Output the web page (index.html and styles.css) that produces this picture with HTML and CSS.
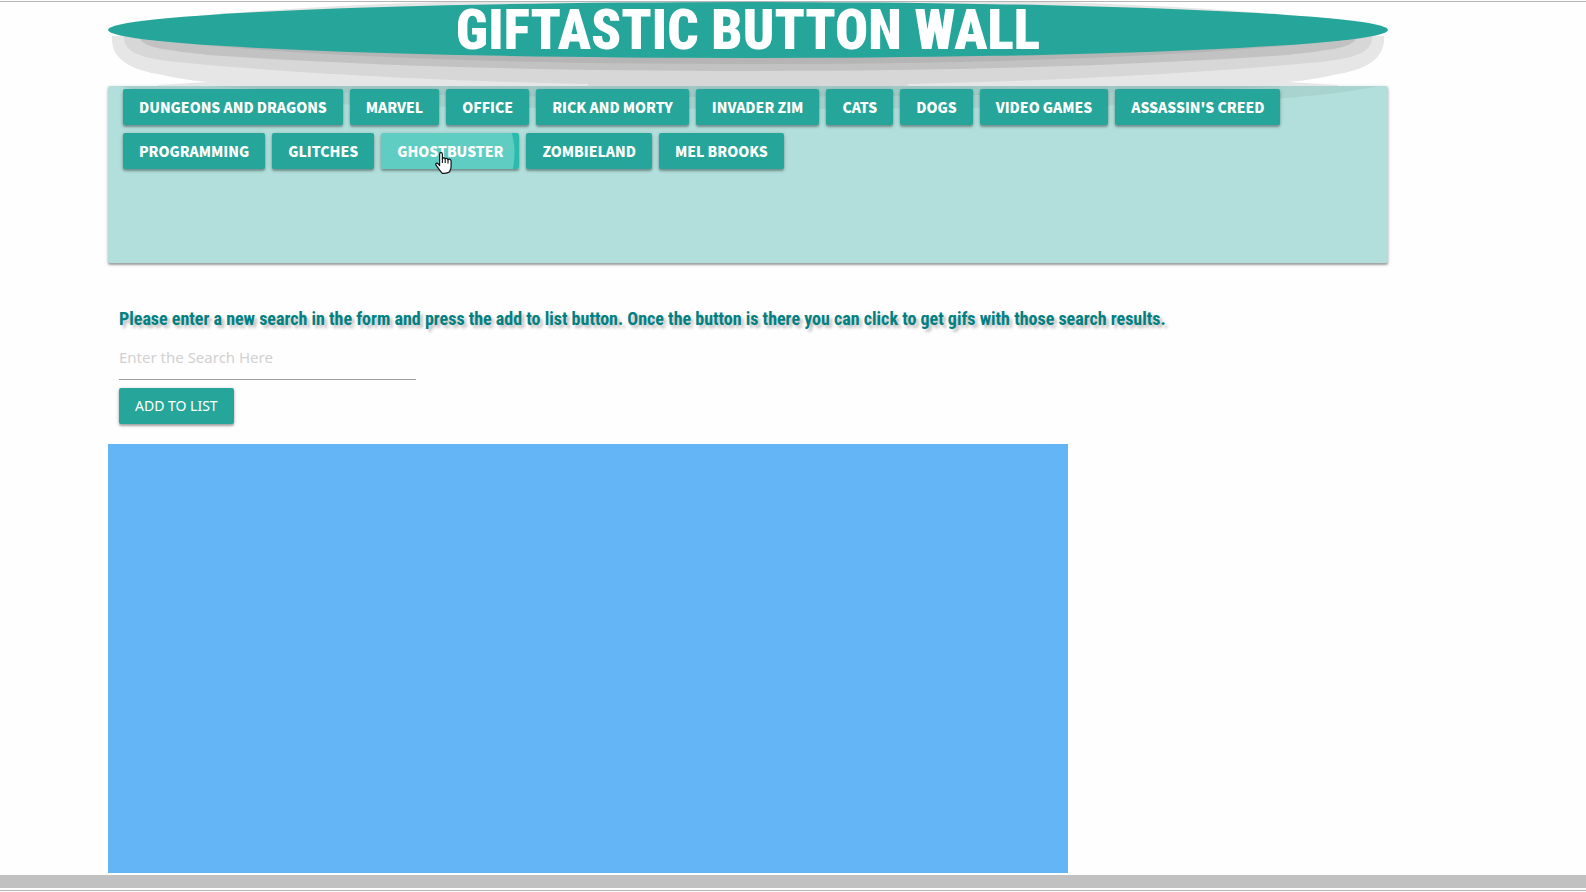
FILE: index.html
```html
<!DOCTYPE html>
<html lang="en">
<head>
<meta charset="utf-8">
<title>Giftastic Button Wall</title>
<link rel="stylesheet" href="styles.css">
</head>
<body>
<main class="container">
  <header class="banner">
    <svg class="banner-shadow" viewBox="0 0 1280 118" preserveAspectRatio="none" aria-hidden="true">
      <path fill="#e6e6e6" d="M42 18 L110 12 Q210 4 330 0 H950 Q1070 4 1170 12 L1238 18 Z"/>
      <path fill="#e6e6e6" d="M4 34 C3 52 14 66 50 72 Q75 78 100 80 L50 83 V84 H1230 V83 L1180 80 Q1205 78 1230 72 C1266 66 1277 52 1276 34 Z"/>
      <path fill="#d7d7d7" d="M16 34 C15 48 28 55 60 59 C150 69 330 79 480 82 V84 H800 V82 C950 79 1130 69 1220 59 C1252 55 1265 48 1264 34 Z"/>
      <path fill="#c2c2c2" d="M32 36 C34 46 60 48 100 53 C260 64 440 69 640 69 S1020 64 1180 53 C1220 48 1246 46 1248 36 Z"/>
      <path fill="#b5b5b5" d="M48 38 C150 50 330 62 640 62 S1130 50 1232 38 Z"/>
      <path fill="#000" fill-opacity=".05" d="M0 84 H1270 Q1230 93 1150 98 C950 110 330 110 130 98 Q50 93 10 84 Z"/>
      <path fill="#000" fill-opacity=".04" d="M100 84 H1180 Q1000 94 640 95 T100 84 Z"/>
    </svg>
    <h1 class="title">GIFTASTIC BUTTON WALL</h1>
  </header>

  <section class="wall">
    <button class="btn" type="button">DUNGEONS AND DRAGONS</button>
    <button class="btn" type="button">MARVEL</button>
    <button class="btn" type="button">OFFICE</button>
    <button class="btn" type="button">RICK AND MORTY</button>
    <button class="btn" type="button">INVADER ZIM</button>
    <button class="btn" type="button">CATS</button>
    <button class="btn" type="button">DOGS</button>
    <button class="btn" type="button">VIDEO GAMES</button>
    <button class="btn" type="button">ASSASSIN'S CREED</button>
    <button class="btn" type="button">PROGRAMMING</button>
    <button class="btn" type="button">GLITCHES</button>
    <button class="btn btn-ripple" type="button">GHOSTBUSTER
      <svg class="pointer" viewBox="0 0 17 22" aria-hidden="true">
        <path fill="#fff" stroke="#10131c" stroke-width="1.2" stroke-linejoin="round" d="M4.6 13.5 V2.2 Q4.6 .7 6 .7 T7.4 2.2 V7 Q7.6 5.8 8.8 5.9 T10.2 7.2 Q10.5 6.2 11.6 6.3 T13 7.8 Q13.4 7 14.4 7.1 T16.1 8.8 V14.5 Q16.1 17 14.8 18.6 V19.8 Q12.5 21.3 9.5 21.3 H7.3 Q5.8 19.5 4.5 17.8 L1 13.2 Q.3 12 1.2 11.3 T3.2 11.8 Z"/>
        <path fill="none" stroke="#10131c" stroke-width="1.1" d="M7.4 6.8 V11 M10.2 7.2 V11 M13 7.8 V11.4"/>
      </svg>
    </button>
    <button class="btn" type="button">ZOMBIELAND</button>
    <button class="btn" type="button">MEL BROOKS</button>
  </section>

  <form class="search">
    <label class="prompt" for="term">Please enter a new search in the form and press the add to list button. Once the button is there you can click to get gifs with those search results.</label>
    <input class="field" id="term" type="text" placeholder="Enter the Search Here">
    <button class="btn btn-add" type="button">ADD TO LIST</button>
  </form>

  <section class="results"></section>
</main>
<footer class="bottom-bar"></footer>
</body>
</html>
```
FILE: styles.css
```css
* {
  box-sizing: border-box;
}

body {
  display: flex;
  flex-direction: column;
  min-height: 100vh;
  margin: 0;
  padding: 1px 0;
  background: #fefefe;
  font-family: "Noto Sans", sans-serif;
}

body::before,
body::after {
  content: "";
  height: 1px;
  background: #b5b5b5;
}

.container {
  display: flex;
  flex: 1;
  flex-direction: column;
  width: calc(100% - 198px);
  padding-left: 108px;
}

.banner {
  position: relative;
  margin-bottom: 28px;
}

.banner-shadow {
  position: absolute;
  top: 0;
  left: 0;
  width: 100%;
  height: 118px;
}

.title {
  position: relative;
  margin: 0;
  border-radius: 50%;
  background: #26a69a;
  color: #fff;
  font: 900 55px/56px "Roboto Condensed", Roboto, sans-serif;
  text-align: center;
}

.wall {
  display: flex;
  flex-wrap: wrap;
  align-content: flex-start;
  gap: 8px 7px;
  min-height: 177px;
  padding: 3px 15px;
  border-radius: 2px;
  background: #b2dfdb;
  box-shadow: 0 2px 2px rgba(0, 0, 0, .3), 0 1px 4px rgba(0, 0, 0, .15);
}

.btn {
  position: relative;
  height: 36px;
  padding: 0 16px;
  border: 0;
  border-radius: 2px;
  background: #26a69a;
  box-shadow: 0 2px 2px rgba(0, 0, 0, .25), 0 1px 4px rgba(0, 0, 0, .2);
  color: #fff;
  font: 900 14px/36px "Noto Sans CJK JP", sans-serif;
  white-space: nowrap;
  cursor: pointer;
}

.btn-ripple {
  background: radial-gradient(circle 73px at 61px 20px, #5fcdc2 72px, #2bbbad 73px);
}

.pointer {
  position: absolute;
  top: 19px;
  left: 54px;
  width: 17px;
  height: 22px;
}

.search {
  display: flex;
  flex-direction: column;
  align-items: flex-start;
  padding: 44px 11px 20px;
}

.prompt {
  color: #008080;
  font: 700 18px/24px "Roboto Condensed", Roboto, sans-serif;
  text-shadow: 3px 3px 3px rgba(0, 0, 0, .25);
}

.field {
  width: 297px;
  height: 45px;
  margin: 4px 0 8px;
  padding: 0;
  border: 0;
  border-bottom: 1px solid #9e9e9e;
  outline: 0;
  background: none;
  font: 15px "Noto Sans", sans-serif;
}

.field::placeholder {
  color: #d1d1d1;
}

.btn-add {
  font: 14px/36px "Noto Sans", sans-serif;
}

.results {
  flex: 1;
  width: 75%;
  background: #64b5f6;
}

.bottom-bar {
  height: 13px;
  margin: 2px 0;
  background: #c1c1c1;
}
```
